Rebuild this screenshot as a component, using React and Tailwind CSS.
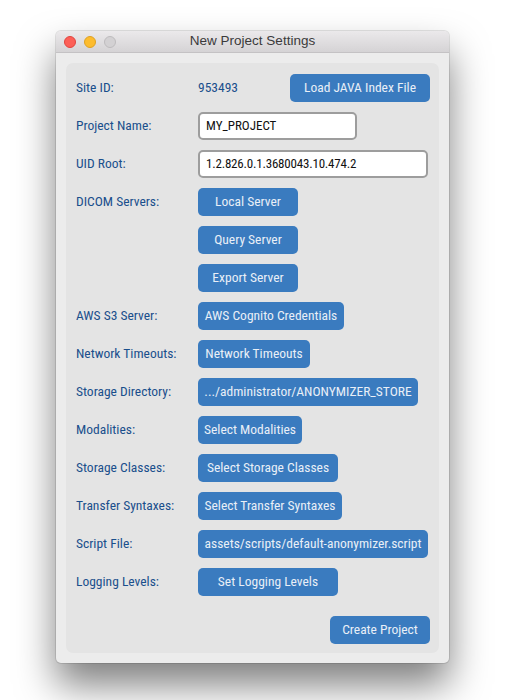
import React from 'react';

const font = { fontFamily: '"Roboto Condensed", "DejaVu Sans Condensed", sans-serif' };

const Btn = ({ children, className = '' }) => (
  <button className={`h-[28px] rounded-[5px] bg-[#3a7bbf] text-[#e9eff7] text-[13.5px] leading-none whitespace-nowrap flex items-center justify-center ${className}`}>
    {children}
  </button>
);

const Row = ({ label, children }) => (
  <div className="flex items-center h-[28px]">
    <div className="w-[122px] shrink-0 text-[13.5px] leading-none text-[#1a4f8c]">{label}</div>
    {children}
  </div>
);

const App = () => {
  return (
    <div className="w-[505px] h-[700px] bg-white pt-[31px] pl-[56px]" style={font}>
      <div className="w-[393px] rounded-[5px] bg-[#ececec] shadow-[0_22px_38px_rgba(0,0,0,0.5),0_0_0_1px_rgba(0,0,0,0.1)] overflow-hidden">
        {/* Title bar */}
        <div className="relative h-[22px] flex items-center justify-center bg-gradient-to-b from-[#ebe9eb] to-[#d5d3d5] border-b border-[#c4c2c4]">
          <div className="absolute left-[8px] top-[5px] flex gap-[8px]">
            <span className="w-[12px] h-[12px] rounded-full bg-[#fc5f57] border border-[#e0443e]" />
            <span className="w-[12px] h-[12px] rounded-full bg-[#fdbc2e] border border-[#dea123]" />
            <span className="w-[12px] h-[12px] rounded-full bg-[#d3d1d3] border border-[#bdbbbd]" />
          </div>
          <span className="text-[13.5px] text-[#3b3a3b]" style={{ fontFamily: '"Liberation Sans", sans-serif' }}>New Project Settings</span>
        </div>

        {/* Body */}
        <div className="p-[10px]">
          <div className="rounded-[7px] bg-[#e4e4e4] pl-[10px] pr-[9px] pt-[11px] pb-[9px] flex flex-col gap-[10px]">
            <Row label="Site ID:">
              <span className="text-[13.5px] leading-none text-[#1a4f8c]">953493</span>
              <Btn className="ml-auto w-[140px]">Load JAVA Index File</Btn>
            </Row>
            <Row label="Project Name:">
              <div className="w-[159px] h-[28px] rounded-[5px] border-2 border-[#9d9d9d] bg-white flex items-center px-[6px] text-[13px] text-[#111]">MY_PROJECT</div>
            </Row>
            <Row label="UID Root:">
              <div className="w-[230px] h-[28px] rounded-[5px] border-2 border-[#9d9d9d] bg-white flex items-center px-[6px] text-[13px] text-[#111] tracking-[-0.2px]">1.2.826.0.1.3680043.10.474.2</div>
            </Row>
            <Row label="DICOM Servers:">
              <Btn className="w-[100px]">Local Server</Btn>
            </Row>
            <Row label="">
              <Btn className="w-[100px]">Query Server</Btn>
            </Row>
            <Row label="">
              <Btn className="w-[100px]">Export Server</Btn>
            </Row>
            <Row label="AWS S3 Server:">
              <Btn className="w-[146px]">AWS Cognito Credentials</Btn>
            </Row>
            <Row label="Network Timeouts:">
              <Btn className="w-[112px]">Network Timeouts</Btn>
            </Row>
            <Row label="Storage Directory:">
              <Btn className="w-[220px]">.../administrator/ANONYMIZER_STORE</Btn>
            </Row>
            <Row label="Modalities:">
              <Btn className="w-[104px]">Select Modalities</Btn>
            </Row>
            <Row label="Storage Classes:">
              <Btn className="w-[140px]">Select Storage Classes</Btn>
            </Row>
            <Row label="Transfer Syntaxes:">
              <Btn className="w-[144px]">Select Transfer Syntaxes</Btn>
            </Row>
            <Row label="Script File:">
              <Btn className="w-[230px]">assets/scripts/default-anonymizer.script</Btn>
            </Row>
            <Row label="Logging Levels:">
              <Btn className="w-[140px]">Set Logging Levels</Btn>
            </Row>
            <div className="flex justify-end mt-[10px]">
              <Btn className="w-[100px]">Create Project</Btn>
            </div>
          </div>
        </div>
      </div>
    </div>
  );
};

export default App;
